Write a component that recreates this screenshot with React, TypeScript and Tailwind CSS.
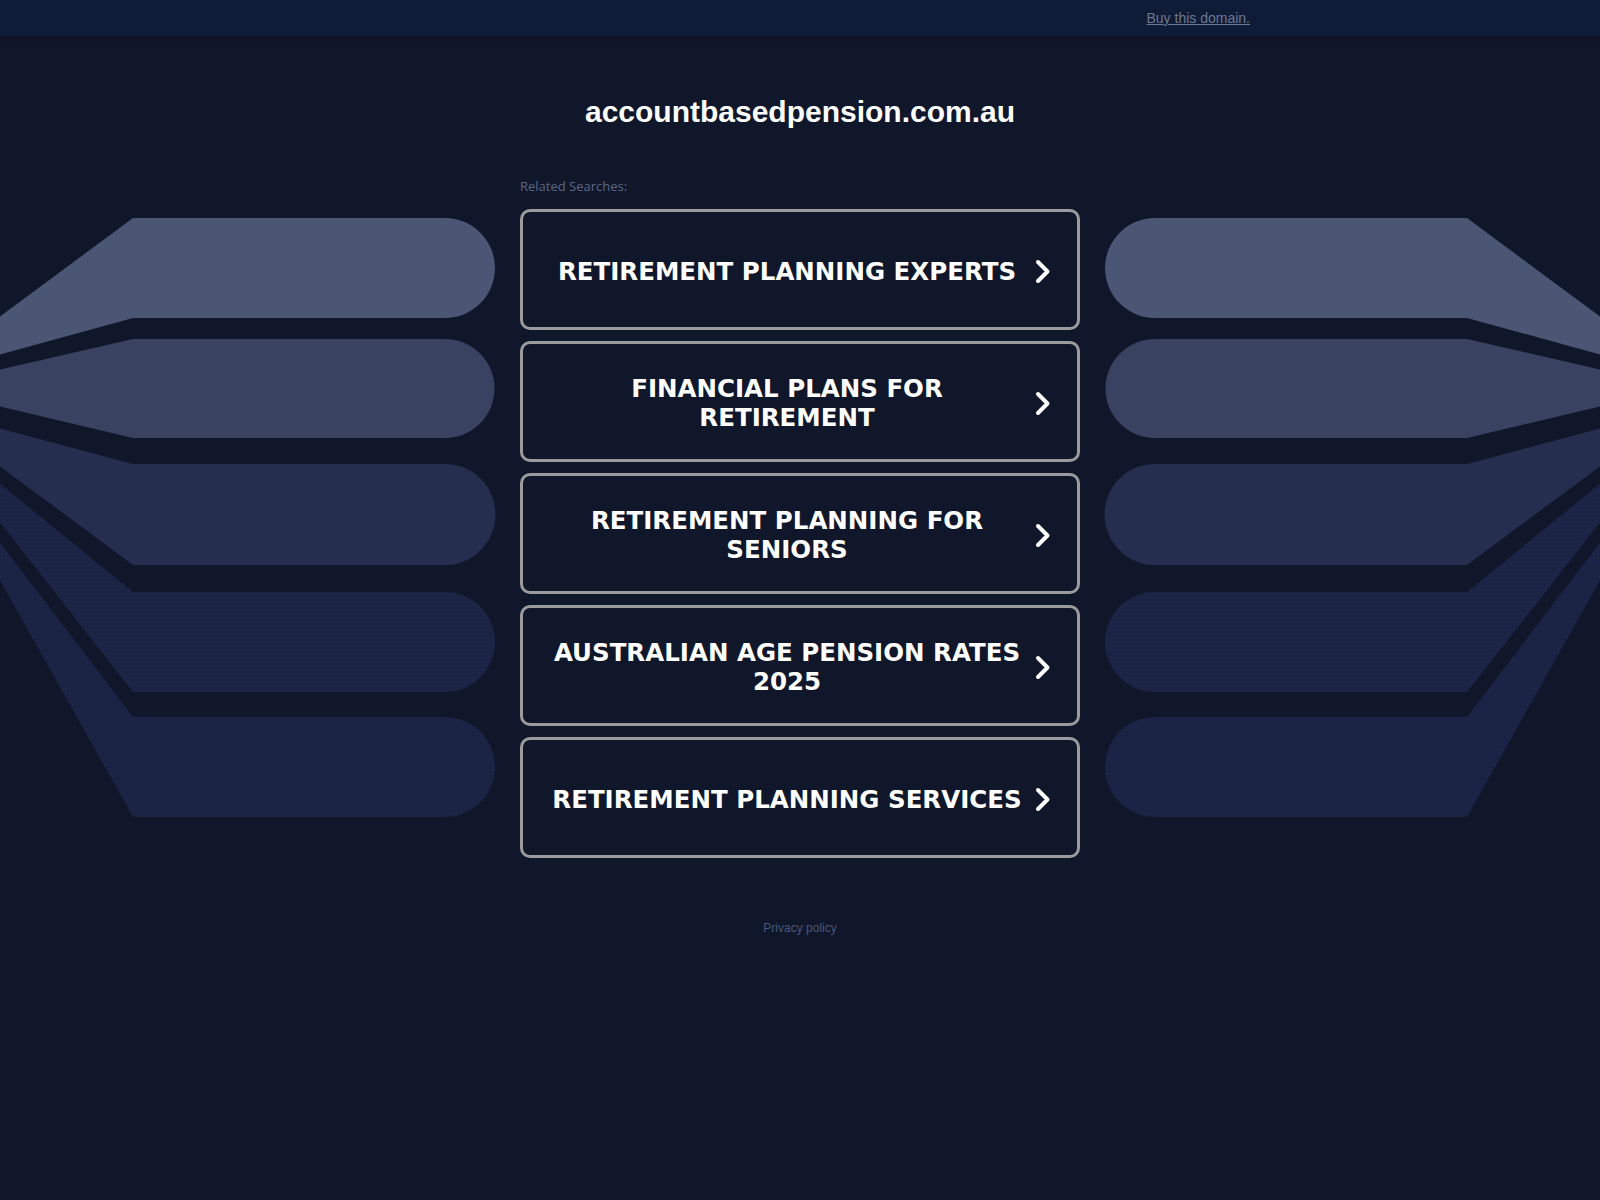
import React from "react";

const shapes = [
  { T: 218, B: 318, a: 318, b: 355, fill: "#4b5574", dots: false },
  { T: 339, B: 438, a: 370, b: 406, fill: "#394261", dots: false },
  { T: 464, B: 565, a: 428, b: 465, fill: "#252e4e", dots: false },
  { T: 592, B: 692, a: 482, b: 520, fill: "#1c2445", dots: true },
  { T: 717, B: 817, a: 540, b: 577, fill: "#1a2343", dots: true },
];

function shapePath(s: { T: number; B: number; a: number; b: number }) {
  const r = (s.B - s.T) / 2;
  return `M -2 ${s.a} L 133 ${s.T} L 445 ${s.T} A ${r} ${r} 0 0 1 445 ${s.B} L 133 ${s.B} L -2 ${s.b} Z`;
}

function Side() {
  return (
    <>
      {shapes.map((s, i) => (
        <g key={i}>
          <path d={shapePath(s)} fill={s.fill} />
          {s.dots && <path d={shapePath(s)} fill="url(#dots)" />}
        </g>
      ))}
    </>
  );
}

function Background() {
  return (
    <svg
      className="absolute left-0 top-0 pointer-events-none"
      width="1600"
      height="900"
      viewBox="0 0 1600 900"
    >
      <defs>
        <pattern id="dots" width="4" height="4" patternUnits="userSpaceOnUse">
          <rect x="1" y="1" width="1" height="1" fill="#2a3561" opacity="0.5" />
        </pattern>
      </defs>
      <Side />
      <g transform="translate(1600,0) scale(-1,1)">
        <Side />
      </g>
    </svg>
  );
}

function Chevron() {
  return (
    <svg width="17" height="27" viewBox="0 0 17 27" className="shrink-0">
      <path
        d="M4 4 L13.5 13.5 L4 23"
        fill="none"
        stroke="#ffffff"
        strokeWidth="4"
        strokeLinecap="round"
        strokeLinejoin="round"
      />
    </svg>
  );
}

const items = [
  "RETIREMENT PLANNING EXPERTS",
  "FINANCIAL PLANS FOR RETIREMENT",
  "RETIREMENT PLANNING FOR SENIORS",
  "AUSTRALIAN AGE PENSION RATES 2025",
  "RETIREMENT PLANNING SERVICES",
];

export default function App() {
  return (
    <div className="relative min-h-[1200px] w-full bg-[#10172a] overflow-hidden">
      <Background />
      <div className="relative">
        <div className="h-[36px] bg-[#0f1c37] shadow-[0_2px_4px_rgba(0,0,0,0.25)]">
          <div className="mx-auto flex h-full w-[1000px] items-center justify-end pr-[50px]">
            <a
              href="#"
              className="text-[14px] leading-[16px] text-[#6e7791] underline"
              style={{ fontFamily: '"Liberation Sans", Arial, sans-serif' }}
            >
              Buy this domain.
            </a>
          </div>
        </div>

        <div className="mx-auto w-[560px]">
          <div
            className="mt-[58px] h-[36px] text-center text-[30px] font-bold leading-[36px] text-white"
            style={{ fontFamily: '"Liberation Sans", Arial, sans-serif' }}
          >
            accountbasedpension.com.au
          </div>

          <div
            className="mt-[48px] text-[13px] leading-[16px] text-[#5c6785]"
            style={{ fontFamily: '"Open Sans", "Liberation Sans", sans-serif' }}
          >
            Related Searches:
          </div>

          <div className="mt-[15px] flex flex-col gap-[11px]">
            {items.map((t) => (
              <div
                key={t}
                className="flex h-[121px] items-center gap-[8px] rounded-[10px] border-[3px] border-[#9b9b9b] bg-[#10172a] pl-[25px] pr-[26px] pt-[3px]"
              >
                <div
                  className="flex-1 text-center text-[24.5px] font-bold leading-[29px] text-white"
                  style={{ fontFamily: '"DejaVu Sans", Verdana, sans-serif' }}
                >
                  {t}
                </div>
                <Chevron />
              </div>
            ))}
          </div>

          <div
            className="mt-[63px] text-center text-[12px] leading-[14px] text-[#4b5678]"
            style={{ fontFamily: '"Liberation Sans", Arial, sans-serif' }}
          >
            Privacy policy
          </div>
        </div>
      </div>
    </div>
  );
}
